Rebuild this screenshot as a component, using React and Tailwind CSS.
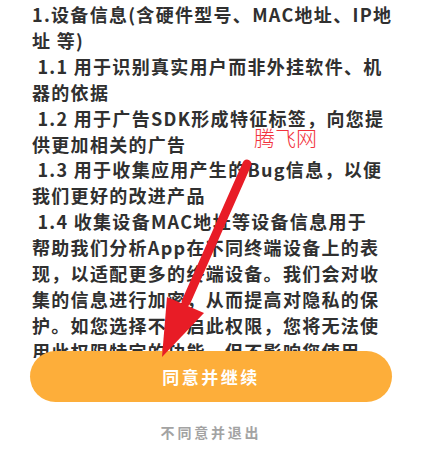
const lines = [
  "1.设备信息(含硬件型号、MAC地址、IP地",
  "址 等)",
  " 1.1 用于识别真实用户而非外挂软件、机",
  "器的依据",
  " 1.2 用于广告SDK形成特征标签，向您提",
  "供更加相关的广告",
  " 1.3 用于收集应用产生的Bug信息，以便",
  "我们更好的改进产品",
  " 1.4 收集设备MAC地址等设备信息用于",
  "帮助我们分析App在不同终端设备上的表",
  "现，以适配更多的终端设备。我们会对收",
  "集的信息进行加密，从而提高对隐私的保",
  "护。如您选择不开启此权限，您将无法使",
  "用此权限特定的功能，但不影响您使用",
];

const font = { fontFamily: '"Noto Sans CJK SC", "Noto Sans", sans-serif' };

export default function App() {
  return (
    <div
      className="relative w-[422px] h-[452px] overflow-hidden bg-white flex flex-col"
      style={font}
    >
      <div className="h-[358px] overflow-hidden pt-[2px] pl-[32px] text-[18px] leading-[25.9px] tracking-[1.3px] font-bold text-[#303030]">
        {lines.map((l, i) => (
          <div key={i} className="whitespace-pre">
            {l}
          </div>
        ))}
      </div>

      <div className="relative z-10 -mt-[7px] px-[30px]">
        <button
          type="button"
          className="w-full h-[51px] rounded-full bg-[#fdae3a] text-white text-[17px] font-bold tracking-[2.5px]"
        >
          同意并继续
        </button>
      </div>

      <div className="mt-[20px] text-center text-[14px] leading-[20px] font-bold tracking-[2.8px] text-[#a3a3a3]">
        不同意并退出
      </div>

      {/* watermark */}
      <div className="absolute left-[254px] top-[124px] z-20 text-[21px] leading-[26px] font-light text-[#f2323c]">
        腾飞网
      </div>

      {/* red arrow */}
      <svg
        className="absolute inset-0 z-30 pointer-events-none"
        width="422"
        height="452"
        viewBox="0 0 422 452"
      >
        <line x1="247" y1="164" x2="186" y2="302" stroke="#e81c26" strokeWidth="9" strokeLinecap="round" />
        <polygon points="167,297 204,313 162,357" fill="#e81c26" />
      </svg>
    </div>
  );
}
